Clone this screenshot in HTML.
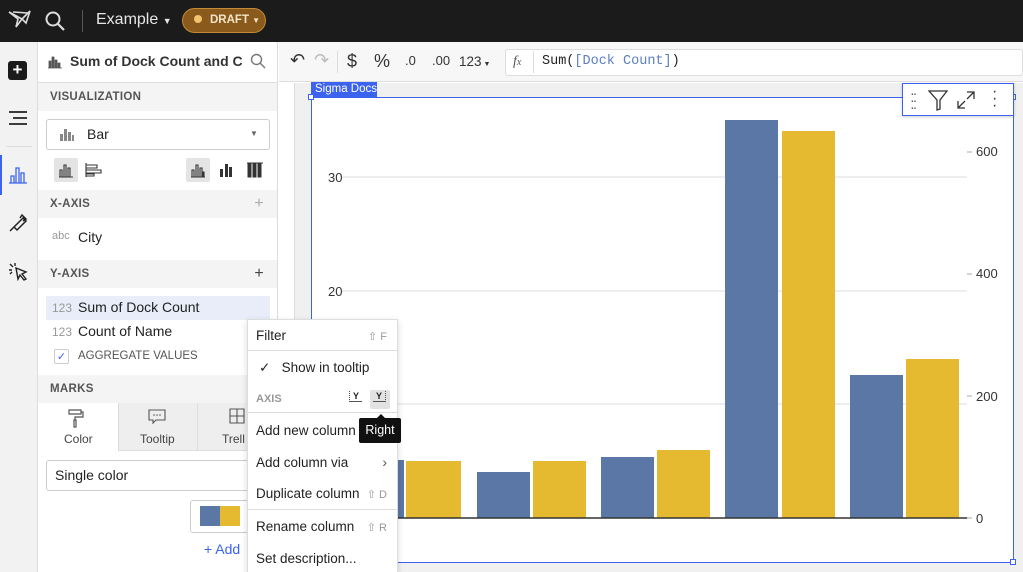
<!DOCTYPE html>
<html><head><style>
*{box-sizing:border-box;margin:0;padding:0}
html,body{width:1023px;height:572px;overflow:hidden}
body{font-family:"Liberation Sans",sans-serif;background:#fff;position:relative;color:#222}
.a{position:absolute}
.hdr{left:0;top:0;width:1023px;height:42px;background:#1b1b1b}
.rail{left:0;top:42px;width:38px;height:530px;background:#f2f2f2;border-right:1px solid #ddd}
.panel{left:38px;top:42px;width:240px;height:530px;background:#fff;border-right:1px solid #ddd;overflow:hidden}
.sec{position:absolute;left:0;width:240px;background:#f4f4f4;font-size:11.5px;font-weight:bold;color:#555;padding-left:12px;letter-spacing:.3px}
.mi{position:absolute;left:8px;font-size:13.5px;color:#222}
.sc{position:absolute;right:10px;font-size:11px;color:#999}
</style></head><body>
<div class="a hdr"></div>
<svg class="a" style="left:8px;top:9px" width="24" height="22" viewBox="0 0 24 22"><path d="M1 3 L14 10 L8 18 L10 10 Z M14 10 L22 2 L18 14 Z M5 3 L20 4" fill="none" stroke="#ddd" stroke-width="1.6"/></svg>
<svg class="a" style="left:44px;top:10px" width="22" height="22"><circle cx="9" cy="9" r="6.5" fill="none" stroke="#ddd" stroke-width="2"/><path d="M14 14 L20 20" stroke="#ddd" stroke-width="2.2"/></svg>
<div class="a" style="left:82px;top:10px;width:1px;height:22px;background:#555"></div>
<div class="a" style="left:96px;top:11px;font-size:16px;color:#e6e6e6">Example <span style="font-size:9px">▼</span></div>
<div class="a" style="left:182px;top:8px;width:84px;height:25px;border-radius:13px;background:#8a5a1c;border:1px solid #c58a35;color:#f3e4c8;font-size:11.5px;font-weight:bold;padding:5px 0 0 11px"><span style="display:inline-block;width:8px;height:8px;border-radius:4px;background:#f2c46e;margin-right:8px"></span>DRAFT <span style="font-size:8px">▼</span></div>

<div class="a rail"></div>
<div class="a" style="left:8px;top:61px;width:19px;height:19px;background:#1b1b1b;border-radius:3px;color:#fff;font-size:17px;font-weight:bold;text-align:center;line-height:18px">+</div>
<svg class="a" style="left:8px;top:110px" width="22" height="16"><path d="M1 2H19M5 8H19M1 14H19" stroke="#222" stroke-width="1.7"/></svg>
<div class="a" style="left:6px;top:146px;width:26px;height:1px;background:#ddd"></div>
<div class="a" style="left:0;top:155px;width:2px;height:40px;background:#3c63f0"></div>
<svg class="a" style="left:8px;top:165px" width="20" height="20"><path d="M1 18H19M3 18V11H6V18M8 18V3H11V18M13 18V8H16V18" fill="none" stroke="#3c63f0" stroke-width="1.3"/></svg>
<svg class="a" style="left:8px;top:213px" width="20" height="20"><path d="M2 18L8 12M6 14l3 3 9-9-3-3-9 9zM12 5l2-3 4 4-3 2" fill="none" stroke="#222" stroke-width="1.5"/></svg>
<svg class="a" style="left:8px;top:262px" width="22" height="20"><path d="M8 6l10 4-4 2 4 5-2 1-4-5-2 4z M2 2l3 3M1 8h3M7 1v3M2 12l2-2" fill="none" stroke="#222" stroke-width="1.4"/></svg>

<div class="a panel">
<svg class="a" style="left:9px;top:13px" width="16" height="14"><path d="M1 13H15M2 13V6H4V13M5 13V2H7V13M8 13V5H10V13M11 13V8H13V13" fill="#555" stroke="#555" stroke-width=".8"/></svg>
<div class="a" style="left:32px;top:11px;font-size:14px;font-weight:bold;color:#333;width:172px;white-space:nowrap;overflow:hidden">Sum of Dock Count and Co...</div>
<svg class="a" style="left:212px;top:11px" width="16" height="16"><circle cx="6.5" cy="6.5" r="5" fill="none" stroke="#777" stroke-width="1.4"/><path d="M10 10l5 5" stroke="#777" stroke-width="1.4"/></svg>
<div class="a" style="left:0;top:40px;width:240px;height:1px;background:#ddd"></div>
<div class="sec" style="top:41px;height:28px;line-height:28px">VISUALIZATION</div>
<div class="a" style="left:8px;top:77px;width:224px;height:31px;border:1px solid #ccc;border-radius:3px"></div>
<svg class="a" style="left:20px;top:84px" width="18" height="16"><path d="M1 15H17M2 15V8H5V15M6 15V3H9V15M10 15V6H13V15M14 15V9H16V15" fill="#888"/></svg>
<div class="a" style="left:49px;top:84px;font-size:14px">Bar</div>
<div class="a" style="left:212px;top:87px;font-size:8px;color:#666">▼</div>
<div class="a" style="left:16px;top:116px;width:24px;height:24px;background:#e4e4e4;border-radius:2px"></div>
<svg class="a" style="left:20px;top:120px" width="16" height="16"><path d="M1 15H15M2 15V8H4V15M6 15V3H8V15M10 15V6H12V15" fill="none" stroke="#333" stroke-width="1.1"/></svg>
<svg class="a" style="left:47px;top:120px" width="18" height="16"><path d="M1 1V15M1 3H12V6H1M1 8H16V11H1M1 12H9V14H1" fill="none" stroke="#333" stroke-width="1.1"/></svg>
<div class="a" style="left:148px;top:116px;width:24px;height:24px;background:#e4e4e4;border-radius:2px"></div>
<svg class="a" style="left:152px;top:120px" width="16" height="16"><path d="M1 15H15M2 15V8H4V15M6 15V3H8V15M10 15V6H12V15M13 15V10H14V15" fill="none" stroke="#333" stroke-width="1.1"/></svg>
<svg class="a" style="left:180px;top:120px" width="16" height="16"><path d="M1 15H15M2 15V7H5V15M7 15V2H10V15M11 15V5H14V15" fill="#333"/></svg>
<svg class="a" style="left:208px;top:120px" width="18" height="16"><path d="M1 1H17M2 1V15H5V1M7 1V15H10V1M12 1V15H15V1" fill="#333" stroke="#333"/></svg>
<div class="sec" style="top:148px;height:28px;line-height:28px">X-AXIS<span style="position:absolute;right:14px;font-weight:normal;font-size:16px;color:#aaa">+</span></div>
<div class="a" style="left:14px;top:188px;font-size:11px;color:#999">abc</div>
<div class="a" style="left:40px;top:187px;font-size:14px">City</div>
<div class="sec" style="top:218px;height:28px;line-height:28px">Y-AXIS<span style="position:absolute;right:14px;font-weight:normal;font-size:16px;color:#444">+</span></div>
<div class="a" style="left:8px;top:254px;width:224px;height:24px;background:#e8edf9"></div>
<div class="a" style="left:14px;top:259px;font-size:12px;color:#999">123</div>
<div class="a" style="left:40px;top:257px;font-size:14px">Sum of Dock Count</div>
<div class="a" style="left:14px;top:283px;font-size:12px;color:#999">123</div>
<div class="a" style="left:40px;top:281px;font-size:14px">Count of Name</div>
<div class="a" style="left:16px;top:307px;width:15px;height:15px;border:1px solid #ccc;border-radius:2px;color:#3c63f0;font-size:11px;text-align:center;line-height:14px">✓</div>
<div class="a" style="left:40px;top:308px;font-size:11.5px;color:#555">AGGREGATE VALUES</div>
<div class="sec" style="top:333px;height:28px;line-height:28px">MARKS</div>
<div class="a" style="left:80px;top:361px;width:160px;height:48px;background:#eee;border-left:1px solid #ddd;border-bottom:1px solid #ddd"></div>
<div class="a" style="left:159px;top:361px;width:1px;height:48px;background:#ddd"></div>
<svg class="a" style="left:30px;top:366px" width="16" height="20"><path d="M1 2H13V6H1ZM13 4H15V9H7V12M6 12H8V19H6Z" fill="none" stroke="#555" stroke-width="1.2"/></svg>
<div class="a" style="left:26px;top:390px;font-size:12px;color:#444">Color</div>
<svg class="a" style="left:110px;top:367px" width="18" height="16"><path d="M1 1H17V11H8L5 14V11H1Z" fill="none" stroke="#555" stroke-width="1.1"/><circle cx="6" cy="6" r=".8" fill="#555"/><circle cx="9" cy="6" r=".8" fill="#555"/><circle cx="12" cy="6" r=".8" fill="#555"/></svg>
<div class="a" style="left:102px;top:390px;font-size:12px;color:#444">Tooltip</div>
<svg class="a" style="left:191px;top:366px" width="16" height="16"><path d="M1 1H15V15H1ZM8 1V15M1 8H15" fill="none" stroke="#555" stroke-width="1.1"/></svg>
<div class="a" style="left:184px;top:390px;font-size:12px;color:#444">Trell</div>
<div class="a" style="left:8px;top:418px;width:232px;height:31px;border:1px solid #ccc;border-radius:3px"></div>
<div class="a" style="left:17px;top:425px;font-size:14px">Single color</div>
<div class="a" style="left:152px;top:458px;width:70px;height:33px;border:1px solid #ccc;border-radius:3px"></div>
<div class="a" style="left:162px;top:464px;width:20px;height:20px;background:#5b77a5"></div>
<div class="a" style="left:182px;top:464px;width:20px;height:20px;background:#e5ba30"></div>
<div class="a" style="left:166px;top:499px;font-size:14px;color:#3c63f0">+ Add</div>
</div>

<!-- toolbar -->
<div class="a" style="left:279px;top:42px;width:744px;height:40px;background:#f7f7f7;border-bottom:1px solid #ddd"></div>
<div class="a" style="left:290px;top:50px;font-size:18px;color:#333">↶</div>
<div class="a" style="left:314px;top:50px;font-size:18px;color:#bbb">↷</div>
<div class="a" style="left:337px;top:51px;width:1px;height:22px;background:#ddd"></div>
<div class="a" style="left:347px;top:51px;font-size:18px;color:#333">$</div>
<div class="a" style="left:374px;top:51px;font-size:18px;color:#333">%</div>
<div class="a" style="left:405px;top:53px;font-size:13px;color:#333">.0</div>
<div class="a" style="left:432px;top:53px;font-size:13px;color:#333">.00</div>
<div class="a" style="left:459px;top:54px;font-size:13.5px;color:#333">123<span style="font-size:7px"> ▼</span></div>
<div class="a" style="left:505px;top:49px;width:518px;height:27px;background:#fff;border:1px solid #ddd;border-radius:3px"></div>
<div class="a" style="left:513px;top:54px;font-size:14px;color:#555;font-family:'Liberation Serif',serif;font-style:italic">f<span style="font-size:10px">x</span></div>
<div class="a" style="left:533px;top:51px;width:1px;height:22px;background:#ddd"></div>
<div class="a" style="left:542px;top:54px;font-size:13.5px;font-family:'Liberation Mono',monospace;color:#222">Sum(<span style="color:#5b7fbf">[Dock Count]</span>)</div>

<!-- canvas -->
<div class="a" style="left:279px;top:83px;width:744px;height:489px;background:#f0f0f0"></div>
<div class="a" style="left:279px;top:83px;width:16px;height:489px;background:#fff;border-right:1px solid #ddd"></div>
<div class="a" style="left:311px;top:97px;width:703px;height:466px;background:#fff;border:1px solid #3c63f0"></div>
<div class="a" style="left:311px;top:82px;width:66px;height:16px;background:#3c63f0;color:#fff;font-size:11.5px;padding:1px 0 0 4px">Sigma Docs</div>
<div class="a" style="left:308px;top:94px;width:6px;height:6px;background:#fff;border:1px solid #3c63f0"></div>
<div class="a" style="left:1010px;top:94px;width:6px;height:6px;background:#fff;border:1px solid #3c63f0"></div>
<div class="a" style="left:1010px;top:559px;width:6px;height:6px;background:#fff;border:1px solid #3c63f0"></div>
<div class="a" style="left:902px;top:83px;width:112px;height:33px;background:#fff;border:1px solid #3c63f0;box-shadow:0 1px 3px rgba(0,0,0,.2)"></div>
<div class="a" style="left:910px;top:90px;font-size:14px;color:#555;letter-spacing:-2px;line-height:7px">··<br>··<br>··</div>
<svg class="a" style="left:928px;top:89px" width="20" height="22"><path d="M1 2H19L12 11V20L9 21V11Z" fill="none" stroke="#333" stroke-width="1.3"/></svg>
<svg class="a" style="left:956px;top:90px" width="20" height="20"><path d="M11 2H18V9M18 2L11 9M9 18H2V11M2 18L9 11" fill="none" stroke="#333" stroke-width="1.3"/></svg>
<div class="a" style="left:992px;top:88px;font-size:16px;color:#333;line-height:7px">·<br>·<br>·</div>

<svg class="a" style="left:312px;top:98px" width="700" height="464">
<g stroke="#ddd" stroke-width="1"><line x1="30" y1="79" x2="655" y2="79"/><line x1="30" y1="193" x2="655" y2="193"/><line x1="30" y1="306" x2="655" y2="306"/></g>
<g font-size="13" fill="#333" font-family="Liberation Sans"><text x="16" y="84">30</text><text x="16" y="198">20</text>
<text x="664" y="58">600</text><text x="664" y="180">400</text><text x="664" y="303">200</text><text x="664" y="425">0</text></g>
<g stroke="#aaa"><line x1="655" y1="54" x2="660" y2="54"/><line x1="655" y1="176" x2="660" y2="176"/><line x1="655" y1="298" x2="660" y2="298"/><line x1="655" y1="420" x2="660" y2="420"/></g>
<g fill="#5b77a5"><rect x="40" y="362" width="52" height="58"/><rect x="165" y="374" width="53" height="46"/><rect x="289" y="359" width="53" height="61"/><rect x="413" y="22" width="53" height="398"/><rect x="538" y="277" width="53" height="143"/></g>
<g fill="#e5ba30"><rect x="94" y="363" width="55" height="57"/><rect x="221" y="363" width="53" height="57"/><rect x="345" y="352" width="53" height="68"/><rect x="470" y="33" width="53" height="387"/><rect x="594" y="261" width="53" height="159"/></g>
<line x1="0" y1="420" x2="655" y2="420" stroke="#333" stroke-width="1.5"/>
</svg>

<!-- context menu -->
<div class="a" style="left:247px;top:319px;width:151px;height:260px;background:#fff;border:1px solid #ddd;box-shadow:0 2px 6px rgba(0,0,0,.15)">
<div class="mi" style="top:8px">Filter</div><div class="sc" style="top:10px">⇧ F</div>
<div class="a" style="left:0;top:30px;width:149px;height:1px;background:#ddd"></div>
<div class="mi" style="top:40px;left:11px">✓ &nbsp;&nbsp;Show in tooltip</div>
<div class="a" style="left:8px;top:73px;font-size:11px;color:#999;font-weight:bold">AXIS</div>
<div class="a" style="left:101px;top:71px;font-size:9px;font-weight:bold;border-left:1px dotted #555;border-bottom:1px solid #555;padding:0 3px">Y</div>
<div class="a" style="left:122px;top:70px;width:20px;height:19px;background:#e2e2e2;border-radius:2px"></div>
<div class="a" style="left:125px;top:71px;font-size:9px;font-weight:bold;border-right:1px dotted #555;border-bottom:1px solid #555;padding:0 3px">Y</div>
<div class="a" style="left:0;top:92px;width:149px;height:1px;background:#ddd"></div>
<div class="mi" style="top:103px">Add new column</div>
<div class="mi" style="top:135px">Add column via</div><div class="sc" style="top:134px;font-size:14px;color:#555">›</div>
<div class="mi" style="top:166px">Duplicate column</div><div class="sc" style="top:168px">⇧ D</div>
<div class="a" style="left:0;top:189px;width:149px;height:1px;background:#ddd"></div>
<div class="mi" style="top:199px">Rename column</div><div class="sc" style="top:201px">⇧ R</div>
<div class="mi" style="top:231px">Set description...</div>
</div>
<div class="a" style="left:376px;top:414px;width:0;height:0;border-left:5px solid transparent;border-right:5px solid transparent;border-bottom:5px solid #111"></div>
<div class="a" style="left:359px;top:418px;width:42px;height:25px;background:#111;color:#fff;font-size:12.5px;text-align:center;line-height:25px;border-radius:2px">Right</div>
</body></html>
